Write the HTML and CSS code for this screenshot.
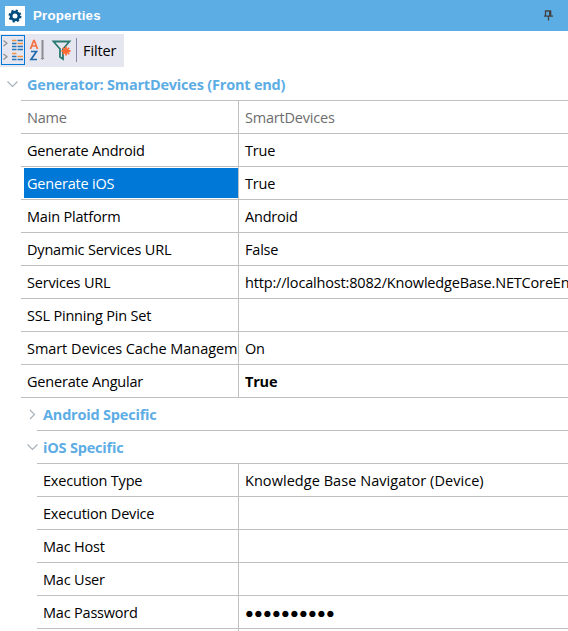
FILE: index.html
```html
<!DOCTYPE html>
<html lang="en">
<head>
<meta charset="utf-8">
<title>Properties</title>
<link rel="stylesheet" href="styles.css">
</head>
<body>
<header class="titlebar">
  <svg class="gear" width="20" height="20" viewBox="0 0 20 20"><path fill="#fff" d="M0 0h20v20H0z"/><circle cx="10" cy="10" r="5.400" fill="none" stroke="#004b7c" stroke-width="2.200" stroke-dasharray="2.121 2.120"/><circle cx="10" cy="10" r="3.900" fill="none" stroke="#004b7c" stroke-width="2.800"/></svg>
  <span class="title">Properties</span>
  <svg class="pin" width="9" height="11" viewBox="0 0 9 11"><path d="M1.500 6V1h5v5M0 6.200h9M4.500 6v4.500" fill="none" stroke="#414141" stroke-width="1.300"/><path d="M5 1h2.200v5H5z" fill="#414141"/></svg>
</header>
<div class="toolbar">
  <div class="tool active"><svg width="24" height="30" viewBox="0 0 24 30"><path d="M2.500 5.500L6 8.200 2.500 11M2.500 19L6 21.700 2.500 24.500" fill="none" stroke="#8f8f8f" stroke-width="1.200"/><path d="M11 5.500h4.500M11 18.500h4.500M16.500 8.500H22M16.500 21.500H22" stroke="#f4913c" stroke-width="1.400"/><path d="M16.500 5.500H22M11 8.500h4.500M11 11.500h4.500M16.500 11.500H22M11 14.500h4.500M16.500 14.500H22M11 21.500h4.500M11 24.500h4.500M16.500 24.500H22" stroke="#2876b5" stroke-width="1.500"/></svg></div>
  <svg class="tool" width="24" height="30" viewBox="0 0 24 30"><path d="M5.500 14L8.700 5.500h.6L12.500 14M6.500 11h5" fill="none" stroke="#f47043" stroke-width="1.700"/><path d="M6 16.500h5.500L6 24.500h6" fill="none" stroke="#1f6bab" stroke-width="1.700"/><path d="M17.500 5v19" stroke="#8c8c90" stroke-width="2"/><path d="M15.500 23h4L17.500 25z" fill="#8c8c90"/></svg>
  <svg class="tool" width="27" height="30" viewBox="0 0 27 30"><path d="M4.500 6.500h16l-6.500 7.500v10l-3-2v-8z" fill="none" stroke="#28796f" stroke-width="1.800"/><path d="M17 11.500v9M12.500 16h9M13.800 12.800l6.400 6.400M20.200 12.800l-6.400 6.400" stroke="#ff6a32" stroke-width="1.800"/></svg>
  <span class="divider"></span>
  <span class="filter">Filter</span>
</div>
<main class="grid">
  <div class="category top"><svg class="arrow" width="11" height="7" viewBox="0 0 11 7"><path d="M.5.5l5 5 5-5"/></svg><span class="c0">Generator: SmartDevices (Front end)</span></div>
  <section class="props">
    <div class="row muted"><span class="name">Name</span><span class="value">SmartDevices</span></div>
    <div class="row"><span class="name">Generate Android</span><span class="value">True</span></div>
    <div class="row selected"><span class="name">Generate iOS</span><span class="value">True</span></div>
    <div class="row"><span class="name">Main Platform</span><span class="value">Android</span></div>
    <div class="row"><span class="name">Dynamic Services URL</span><span class="value">False</span></div>
    <div class="row"><span class="name">Services URL</span><span class="value url">http://localhost:8082/KnowledgeBase.NETCoreEn</span></div>
    <div class="row"><span class="name">SSL Pinning Pin Set</span><span class="value"></span></div>
    <div class="row"><span class="name cache">Smart Devices Cache Managem</span><span class="value">On</span></div>
    <div class="row changed"><span class="name">Generate Angular</span><span class="value">True</span></div>
  </section>
  <div class="category sub"><svg class="arrow" width="11" height="11" viewBox="0 0 11 11"><path d="M3 1l4.500 4.500L3 10"/></svg><span class="c0">Android Specific</span></div>
  <div class="category sub"><svg class="arrow" width="11" height="7" viewBox="0 0 11 7"><path d="M.5.5l5 5 5-5"/></svg><span class="c0">iOS Specific</span></div>
  <section class="props nested">
    <div class="row"><span class="name">Execution Type</span><span class="value loose">Knowledge Base Navigator (Device)</span></div>
    <div class="row"><span class="name">Execution Device</span><span class="value"></span></div>
    <div class="row"><span class="name">Mac Host</span><span class="value"></span></div>
    <div class="row"><span class="name">Mac User</span><span class="value"></span></div>
    <div class="row"><span class="name">Mac Password</span><span class="value password">●●●●●●●●●●</span></div>
    <div class="row"><span class="name"></span><span class="value"></span></div>
  </section>
</main>
</body>
</html>
```
FILE: styles.css
```css
* { box-sizing: border-box; }
body {
  margin: 0;
  height: 631px;
  overflow: hidden;
  background: #fff;
  color: #000;
  font: 14.5px/34px "Open Sans", "Noto Sans", sans-serif;
  letter-spacing: -0.2px;
}
.titlebar {
  display: flex;
  align-items: center;
  height: 31px;
  padding: 0 15px 0 5px;
  background: #5dade5;
  color: #fff;
}
.title {
  flex: 1;
  margin-left: 8px;
  font: bold 13.3px/31px "Liberation Sans", sans-serif;
  letter-spacing: 0.2px;
}
.toolbar {
  display: flex;
  width: 124px;
  height: 33px;
  margin-top: 3px;
  padding: 1px 0 0 1px;
  background: #e6e6f0;
}
.tool { flex: none; height: 30px; }
.active { width: 24px; outline: 1px solid #0078d7; outline-offset: -1px; background: #e6e6f0; }
.active svg { display: block; }
.divider { width: 1px; height: 24px; margin: 3px 6px 0 0; background: #8488a8; }
.filter { line-height: 31px; letter-spacing: -0.1px; }
.grid { margin-top: 1px; }
.category {
  display: flex;
  align-items: center;
  height: 33px;
  color: #5dade5;
  font-weight: bold;
  letter-spacing: -0.2px;
}
.top { padding-left: 7px; }
.sub { padding-left: 27px; }
.category .c0 {
  flex: 1;
  height: 33px;
  padding-left: 6px;
}
.top .c0 { margin-left: 3px; }
.arrow { flex: none; fill: none; stroke: #a5afb7; stroke-width: 1.1; }
.sub .c0 { margin-left: -1px; border-bottom: 1px solid #c0c0c0; }
.props { margin-left: 21px; border-top: 1px solid #c0c0c0; margin-top: -1px; }
.nested { margin-left: 37px; }
.row {
  display: flex;
  height: 33px;
  border-bottom: 1px solid #c0c0c0;
  white-space: nowrap;
}
.name { width: 217px; padding-left: 6px; overflow: hidden; }
.nested .name { width: 201px; }
.value {
  flex: 1;
  min-width: 0;
  padding-left: 6px;
  border-left: 1px solid #c0c0c0;
  overflow: hidden;
}
.loose { letter-spacing: 0.05px; }
.cache { letter-spacing: -0.06px; }
.url { letter-spacing: -0.17px; }
.muted { color: #6d6d6d; }
.selected .name {
  width: 214px;
  height: 30px;
  margin: 1px 0 1px 3px;
  padding-left: 3px;
  background: #0078d7;
  color: #fff;
  line-height: 32px;
}
.changed .value { font-weight: bold; }
.password { letter-spacing: 0.25px; }
```
